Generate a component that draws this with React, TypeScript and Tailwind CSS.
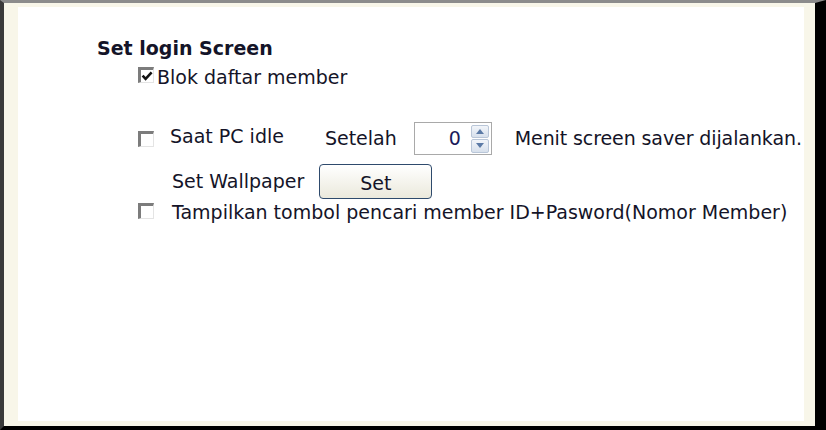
import React from "react";

function Box({ checked = false }: { checked?: boolean }) {
  return (
    <span className="relative flex h-[16px] w-[16px] shrink-0 border-l-[3px] border-t-[3px] border-r border-b border-l-[#7c7c7c] border-t-[#7c7c7c] border-r-[#e4e4e4] border-b-[#e4e4e4] bg-white">
      {checked && (
        <svg viewBox="0 0 12 12" className="absolute left-[0px] top-[0px] h-[12px] w-[12px]">
          <path d="M1.6 5.6 L4.6 8.8 L10.6 2.4" fill="none" stroke="#111" strokeWidth="2.6" />
        </svg>
      )}
    </span>
  );
}

function Spinner() {
  return (
    <div className="flex h-[33px] w-[78px] items-center border border-[#a9a9a9] bg-white pl-[6px] pr-[2px]">
      <span className="flex-1 pr-[10px] text-right text-[#1b1b5a]">0</span>
      <div className="flex h-[28px] w-[18px] flex-col gap-[1px]">
        <div className="flex flex-1 items-center justify-center rounded-[2px] border border-[#b9c6d8] bg-gradient-to-b from-[#f2f5fa] to-[#d7e0ec]">
          <svg viewBox="0 0 8 5" className="h-[5px] w-[8px]">
            <path d="M0 5 L4 0 L8 5 Z" fill="#5b7aa6" />
          </svg>
        </div>
        <div className="flex flex-1 items-center justify-center rounded-[2px] border border-[#b9c6d8] bg-gradient-to-b from-[#f2f5fa] to-[#d7e0ec]">
          <svg viewBox="0 0 8 5" className="h-[5px] w-[8px]">
            <path d="M0 0 L4 5 L8 0 Z" fill="#5b7aa6" />
          </svg>
        </div>
      </div>
    </div>
  );
}

export default function App() {
  return (
    <div className="h-[430px] w-[826px] overflow-hidden bg-black">
      <div className="flex h-full w-full flex-col border-l-4 border-t-[3px] border-r-[11px] border-b-[4px] border-l-[#3a3a3a] border-t-[#8c8c8c] border-r-black border-b-black bg-[#f8f6e9] pt-[4px] pl-[14px] pr-[11px] pb-[5px]">
        <div
          className="flex-1 whitespace-nowrap bg-white pl-[79px] pt-[30px] text-[19px] leading-none text-[#141428]"
          style={{ fontFamily: '"DejaVu Sans", Verdana, sans-serif' }}
        >
          <div className="flex h-[22px] items-center text-[19px] font-bold">Set login Screen</div>

          <div className="mt-[6px] flex h-[20px] items-center pl-[41px]">
            <Box checked />
            <span className="ml-[3px] mt-[5px]">Blok daftar member</span>
          </div>

          <div className="mt-[37px] flex h-[33px] items-center pl-[41px]">
            <Box />
            <span className="ml-[16px] -mt-[4px] shrink-0">Saat PC idle</span>
            <span className="ml-[41px] shrink-0">Setelah</span>
            <span className="ml-[17px] shrink-0">
              <Spinner />
            </span>
            <span className="ml-[23px] shrink-0 tracking-[-0.1px]">Menit screen saver dijalankan.</span>
          </div>

          <div className="mt-[9px] flex items-center pl-[75px]">
            <span>Set Wallpaper</span>
            <button className="ml-[15px] flex h-[35px] w-[113px] items-center justify-center rounded-[4px] border-[1.5px] border-[#2e4a6c] bg-gradient-to-b from-[#ffffff] to-[#ebe9dc] pt-[3px] text-[19px] text-[#141428]">
              Set
            </button>
          </div>

          <div className="mt-[2px] flex h-[20px] items-center pl-[41px]">
            <Box />
            <span className="ml-[18px] mt-[3px]">Tampilkan tombol pencari member ID+Pasword(Nomor Member)</span>
          </div>
        </div>
      </div>
    </div>
  );
}
